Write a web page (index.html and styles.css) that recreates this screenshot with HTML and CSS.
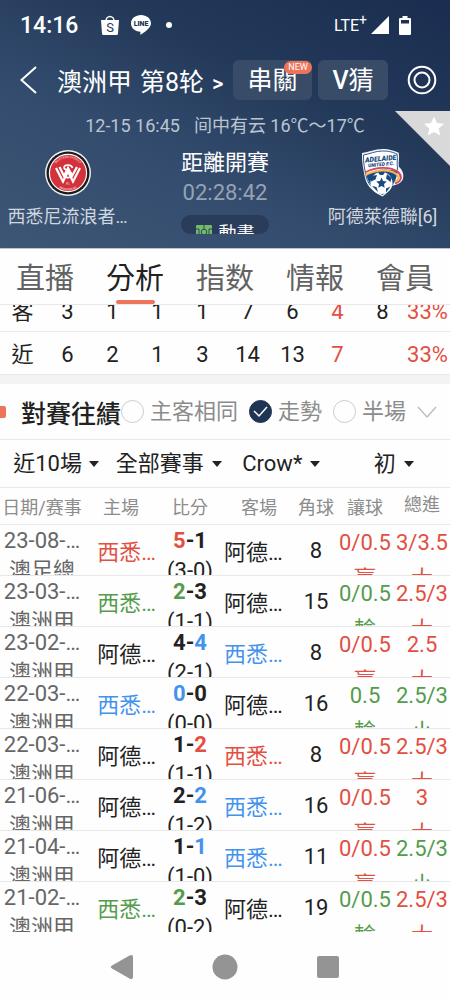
FILE: index.html
```html
<!DOCTYPE html>
<html lang="zh-Hant">
  <head>
    <meta charset="UTF-8" />
    <meta name="viewport" content="width=device-width, initial-scale=1.0" />
    <title>澳洲甲 第8轮</title>
    <link rel="stylesheet" href="styles.css">
  </head>
  <body>
    <!-- ========== HEADER ========== -->
    <header class="hero">
      <div class="status-bar">
        <span class="clock">14:16</span>
        <svg class="status-shop" width="18" height="20" viewBox="0 0 18 20">
          <path d="M5 6a4 4.500 0 0 1 8 0" fill="none" stroke="#fff" stroke-width="1.500" />
          <path d="M0 5h18l-1 13.500a1.500 1.500 0 0 1-1.500 1.500h-13A1.500 1.500 0 0 1 1 18.500z" fill="#fff" />
          <text x="9" y="17" text-anchor="middle" font-size="13" fill="#24395b">S</text>
        </svg>
        <svg class="status-line" width="20" height="20" viewBox="0 0 20 20">
          <path d="M10 0c5.500 0 10 3.600 10 8.200 0 4.800-6.500 9-10 11.300-.6.400-.8 0-.7-.6l.2-2.200C4 16.500 0 12.800 0 8.200 0 3.600 4.500 0 10 0z" fill="#fff" />
          <text x="10" y="11" text-anchor="middle" font-size="7" font-weight="900" fill="#1f3558">LINE</text>
        </svg>
        <span class="status-dot"></span>
        <span class="network">LTE<sup>+</sup></span>
        <svg width="18" height="18" viewBox="0 0 18 18"><path d="M18 0v18H0z" fill="#fff" /></svg>
        <svg class="battery" width="12" height="19" viewBox="0 0 12 19">
          <path d="M3.500 0h5v2H11a1 1 0 0 1 1 1v15a1 1 0 0 1-1 1H1a1 1 0 0 1-1-1V3a1 1 0 0 1 1-1h2.500z" fill="#fff" />
          <path d="M2 4h8v3.500H2z" fill="#1d3155" />
        </svg>
      </div>

      <div class="title-bar">
        <button type="button" class="icon-button back" aria-label="返回">
          <svg width="17" height="28" viewBox="0 0 17 28"><path d="M16 1L1.500 14 16 27" fill="none" stroke="#fff" stroke-width="2" /></svg>
        </button>
        <h1><span>澳洲甲</span><span>第8轮</span><span class="more">&gt;</span></h1>
        <button type="button" class="chip chip-wide">串關<span class="badge">NEW</span></button>
        <button type="button" class="chip"><b>V</b>猜</button>
        <button type="button" class="icon-button target" aria-label="設定">
          <svg width="30" height="30" viewBox="0 0 30 30" fill="none" stroke="#fff" stroke-width="2">
            <circle cx="15" cy="15" r="13.300" />
            <circle cx="15" cy="15" r="7.500" />
          </svg>
        </button>
      </div>

      <p class="kickoff"><span>12-15 16:45</span><span>间中有云 16℃～17℃</span></p>

      <div class="match">
        <div class="team">
          <svg width="48" height="48" viewBox="0 0 48 48">
            <defs>
              <path id="arcTop" d="M9 24a15 15 0 0 1 30 0" />
              <path id="arcBottom" d="M6.500 24a17.500 17.500 0 0 0 35 0" />
            </defs>
            <circle cx="24" cy="24" r="23" fill="#f1eeee" />
            <circle cx="24" cy="24" r="21.500" fill="#191a1d" />
            <circle cx="24" cy="24" r="19.200" fill="#fff" />
            <circle cx="24" cy="24" r="18" fill="#d3323b" />
            <g fill="none" stroke="#fff" stroke-width="2.200">
              <path d="M12 19l7 13.500 5-10 5 10L36 19" />
              <path d="M15.500 18l4.500 9 4-8 4 8 5-9" />
              <path d="M28.500 19c-1-4-8-4-8.500-.5-.3 3 8.500 3 8 7.500-.5 3.500-7 3.500-8 0" stroke-width="1.600" />
            </g>
            <g font-size="3.200" fill="#ffdede" text-anchor="middle">
              <text><textPath href="#arcTop" startOffset="50%">WESTERN SYDNEY</textPath></text>
              <text><textPath href="#arcBottom" startOffset="50%">WANDERERS</textPath></text>
              <text x="24" y="36" font-size="3">FC</text>
            </g>
          </svg>
          <span class="team-name">西悉尼流浪者…</span>
        </div>

        <div class="countdown">
          <span class="countdown-label">距離開賽</span>
          <span class="countdown-time">02:28:42</span>
          <button type="button" class="animation">
            <svg width="16" height="14" viewBox="0 0 16 14">
              <rect width="16" height="14" rx="1" fill="#75b96c" />
              <g fill="none" stroke="#2c4a55" stroke-width="1">
                <circle cx="8" cy="7" r="2.800" />
                <path d="M8 0v4M8 10v4M0 4h3v6H0M16 4h-3v6h3" />
              </g>
            </svg>
            動畫
          </button>
        </div>

        <div class="team">
          <svg width="48" height="48" viewBox="2 0 46 48">
            <path d="M4 4c7-1 13-4 20.500-4S36 2 40.500 3.500c1.500 5-.5 10 .5 14.500 4 3 5.500 9 3.500 13s-8 5-10.500 6c-3 4.500-5 7.500-9.500 10.500C17 44 9 38 7 29 5.500 21 3.500 13 4 4z" fill="#f2f4f7" />
            <path d="M5.500 6C12 5 17 2 24.500 2S35 3.500 39 5c1 5-.5 9 .5 14-1 9-7 21-15 26.500C17 42 10.500 36 8.500 29 7 21 5 14 5.500 6z" fill="#fff" stroke="#315d91" stroke-width="1" />
            <path d="M8.500 26c9-6 22-7 31-3-1 9-7 18-15 22.500C17 42 10 35 8.500 26z" fill="#174a80" />
            <circle cx="23.500" cy="34" r="11" fill="#fff" />
            <g fill="#174a80">
              <path d="M23.500 28.500l1.500 3.500 3.800.5-2.800 2.500.7 3.800-3.200-1.800-3.200 1.800.7-3.800-2.800-2.500 3.800-.5z" />
              <path d="M13 27l6-1-1.500 4.500-4.500 2zM29 25l4.500 4-1 4-4.500-3.500zM14 37l4.500 1 1.500 5zM28 39.500l4.500-2-4.500 6zM20 23.500l3.500-1.500 3.500 1.500-2 2.500h-3z" />
            </g>
            <path d="M7 23.500c11-6 26-6 33-.5 4.500 4 4 9-3 11.500" fill="none" stroke="#d74266" stroke-width="1.800" />
            <path d="M7.500 26c11-6 25-6 31-.8 3.500 3.500 2.500 6-1.500 7" fill="none" stroke="#f5b94e" stroke-width="2" />
            <g font-weight="900" font-style="italic" fill="#17477c" text-anchor="middle" transform="rotate(-5 24 13)">
              <text x="23" y="12" font-size="7">ADELAIDE</text>
              <text x="23" y="17" font-size="5">UNITED F.C.</text>
            </g>
          </svg>
          <span class="team-name">阿德萊德聯[6]</span>
        </div>
      </div>

      <button type="button" class="favorite" aria-label="收藏">
        <svg width="55" height="55" viewBox="0 0 55 55">
          <path d="M0 0h55v55z" fill="#d9d9d9" />
          <path d="M39 5.500l3 6.500 7 .8-5.200 4.800 1.400 7L39 21l-6.200 3.600 1.400-7-5.200-4.800 7-.8z" fill="#fff" />
        </svg>
      </button>
    </header>

    <!-- ========== TABS ========== -->
    <nav class="tabs">
      <a href="#live">直播</a>
      <a href="#analysis" class="active">分析</a>
      <a href="#odds">指数</a>
      <a href="#news">情報</a>
      <a href="#member">會員</a>
    </nav>

    <main>
      <!-- ========== STANDINGS ========== -->
      <div class="standings-view">
        <table class="standings">
          <tbody>
            <tr><th scope="row">客</th><td>3</td><td>1</td><td>1</td><td>1</td><td>7</td><td>6</td><td class="red">4</td><td>8</td><td class="red">33%</td></tr>
            <tr><th scope="row">近</th><td>6</td><td>2</td><td>1</td><td>3</td><td>14</td><td>13</td><td class="red">7</td><td></td><td class="red">33%</td></tr>
          </tbody>
        </table>
      </div>

      <!-- ========== HEAD TO HEAD ========== -->
      <section class="h2h" id="analysis">
        <div class="section-head">
          <h2>對賽往績</h2>
          <label class="check"><input type="checkbox" />主客相同</label>
          <label class="check"><input type="checkbox" checked />走勢</label>
          <label class="check"><input type="checkbox" />半場</label>
          <button type="button" class="icon-button fold" aria-label="收起">
            <svg width="20" height="12" viewBox="0 0 20 12"><path d="M1 1l9 10 9-10" fill="none" stroke="#bbb" stroke-width="1.300" /></svg>
          </button>
        </div>

        <div class="filters">
          <label class="filter"><select aria-label="場數"><option>近10場</option></select></label>
          <label class="filter"><select aria-label="賽事"><option>全部賽事</option></select></label>
          <label class="filter"><select aria-label="公司"><option>Crow*</option></select></label>
          <label class="filter"><select aria-label="盤口"><option>初</option></select></label>
        </div>

        <table class="results">
          <colgroup>
            <col class="col-date"><col class="col-team"><col class="col-score"><col class="col-team"><col class="col-corner"><col class="col-handicap"><col class="col-total">
          </colgroup>
          <thead>
            <tr>
              <th>日期/赛事</th>
              <th>主場</th>
              <th>比分</th>
              <th>客場</th>
              <th>角球</th>
              <th>讓球</th>
              <th><div class="wrap-head">總進球</div></th>
            </tr>
          </thead>
          <tbody>
            <tr>
              <td><div class="cell date">23-08-…<br>澳足總</div></td>
              <td class="home red">西悉…</td>
              <td><div class="cell"><b><span class="red">5</span>-1</b><br>(3-0)</div></td>
              <td class="away">阿德…</td>
              <td class="corner">8</td>
              <td class="red"><div class="cell odds">0/0.5<br>贏</div></td>
              <td class="red"><div class="cell odds">3/3.5<br>大</div></td>
            </tr>
            <tr>
              <td><div class="cell date">23-03-…<br>澳洲甲</div></td>
              <td class="home green">西悉…</td>
              <td><div class="cell"><b><span class="green">2</span>-3</b><br>(1-1)</div></td>
              <td class="away">阿德…</td>
              <td class="corner">15</td>
              <td class="green"><div class="cell odds">0/0.5<br>輸</div></td>
              <td class="red"><div class="cell odds">2.5/3<br>大</div></td>
            </tr>
            <tr>
              <td><div class="cell date">23-02-…<br>澳洲甲</div></td>
              <td class="home">阿德…</td>
              <td><div class="cell"><b>4-<span class="blue">4</span></b><br>(2-1)</div></td>
              <td class="away blue">西悉…</td>
              <td class="corner">8</td>
              <td class="red"><div class="cell odds">0/0.5<br>贏</div></td>
              <td class="red"><div class="cell odds">2.5<br>大</div></td>
            </tr>
            <tr>
              <td><div class="cell date">22-03-…<br>澳洲甲</div></td>
              <td class="home blue">西悉…</td>
              <td><div class="cell"><b><span class="blue">0</span>-0</b><br>(0-0)</div></td>
              <td class="away">阿德…</td>
              <td class="corner">16</td>
              <td class="green"><div class="cell odds">0.5<br>輸</div></td>
              <td class="green"><div class="cell odds">2.5/3<br>小</div></td>
            </tr>
            <tr>
              <td><div class="cell date">22-03-…<br>澳洲甲</div></td>
              <td class="home">阿德…</td>
              <td><div class="cell"><b>1-<span class="red">2</span></b><br>(1-1)</div></td>
              <td class="away red">西悉…</td>
              <td class="corner">8</td>
              <td class="red"><div class="cell odds">0/0.5<br>贏</div></td>
              <td class="red"><div class="cell odds">2.5/3<br>大</div></td>
            </tr>
            <tr>
              <td><div class="cell date">21-06-…<br>澳洲甲</div></td>
              <td class="home">阿德…</td>
              <td><div class="cell"><b>2-<span class="blue">2</span></b><br>(1-2)</div></td>
              <td class="away blue">西悉…</td>
              <td class="corner">16</td>
              <td class="red"><div class="cell odds">0/0.5<br>贏</div></td>
              <td class="red"><div class="cell odds">3<br>大</div></td>
            </tr>
            <tr>
              <td><div class="cell date">21-04-…<br>澳洲甲</div></td>
              <td class="home">阿德…</td>
              <td><div class="cell"><b>1-<span class="blue">1</span></b><br>(1-0)</div></td>
              <td class="away blue">西悉…</td>
              <td class="corner">11</td>
              <td class="red"><div class="cell odds">0/0.5<br>贏</div></td>
              <td class="green"><div class="cell odds">2.5/3<br>小</div></td>
            </tr>
            <tr>
              <td><div class="cell date">21-02-…<br>澳洲甲</div></td>
              <td class="home green">西悉…</td>
              <td><div class="cell"><b><span class="green">2</span>-3</b><br>(0-2)</div></td>
              <td class="away">阿德…</td>
              <td class="corner">19</td>
              <td class="green"><div class="cell odds">0/0.5<br>輸</div></td>
              <td class="red"><div class="cell odds">2.5/3<br>大</div></td>
            </tr>
          </tbody>
        </table>
      </section>
    </main>

    <!-- ========== SYSTEM NAV ========== -->
    <footer class="system-nav">
      <button type="button" class="icon-button" aria-label="Back">
        <svg width="26" height="26" viewBox="0 0 26 26"><path d="M3 11.500L20.500 1.500Q24 0 24 3v20q0 3-3.500 1.500L3 14.500q-2.500-1.500 0-3z" fill="#949494" /></svg>
      </button>
      <button type="button" class="icon-button" aria-label="Home">
        <svg width="26" height="26" viewBox="0 0 26 26"><circle cx="13" cy="13" r="12.500" fill="#949494" /></svg>
      </button>
      <button type="button" class="icon-button" aria-label="Recent">
        <svg width="26" height="26" viewBox="0 0 26 26"><rect x="2" y="2" width="22" height="22" rx="2" fill="#949494" /></svg>
      </button>
    </footer>
  </body>
</html>
```
FILE: styles.css
```css
:root {
  --text: #222;
  --muted: #8c8c8c;
  --line: #e8e8e8;
  --accent: #ee735b;
  --red: #e34f41;
  --green: #549c4b;
  --blue: #4393ee;
}

* {
  margin: 0;
  padding: 0;
  box-sizing: border-box;
}

body {
  min-height: 100vh;
  display: flex;
  flex-direction: column;
  background: #fefefe;
  color: var(--text);
  font-family: Roboto, "Noto Sans CJK TC", sans-serif;
  font-size: 22px;
}

button,
input,
select {
  font: inherit;
  color: inherit;
  border: none;
  background: none;
}

button {
  cursor: pointer;
}

svg {
  display: block;
}

.icon-button {
  flex: none;
}

.red {
  color: var(--red);
}

.green {
  color: var(--green);
}

.blue {
  color: var(--blue);
}

/* ========== HEADER ========== */
.hero {
  position: relative;
  height: 249px;
  overflow: hidden;
  border-bottom: 1px solid #bac3cf;
  background: linear-gradient(25deg, #3d5676 0%, #344d6e 35%, #23395a 65%, #1a2d50 100%);
  color: #fff;
}

.status-bar {
  display: flex;
  align-items: center;
  height: 50px;
  padding: 0 39px 0 20px;
}

.clock {
  width: 57px;
  font-size: 23px;
  font-weight: 500;
}

.status-shop {
  margin-left: 24px;
}

.status-line {
  margin-left: 12px;
}

.status-dot {
  width: 6px;
  height: 6px;
  margin-left: 15px;
  border-radius: 50%;
  background: #fff;
}

.network {
  margin: 0 4px 0 auto;
  font-size: 16px;
}

.network sup {
  font-size: 14px;
  line-height: 1px;
}

.battery {
  margin-left: 10px;
}

.title-bar {
  display: flex;
  align-items: center;
  height: 60px;
  padding: 0 13px 0 20px;
}

.title-bar h1 {
  flex: 1;
  display: flex;
  align-items: baseline;
  gap: 8px;
  margin-left: 20px;
  font-size: 25px;
  font-weight: 400;
  white-space: nowrap;
}

.more {
  font-size: 22px;
  font-weight: 500;
}

.chip {
  position: relative;
  width: 70px;
  height: 40px;
  margin-right: 19px;
  border-radius: 6px;
  background: #384b67;
  font-size: 25px;
  line-height: 42px;
}

.chip-wide {
  width: 79px;
  margin-right: 6px;
}

.chip b {
  font-weight: 500;
}

.badge {
  position: absolute;
  top: 1px;
  right: 0;
  width: 28px;
  border-radius: 7px;
  background: var(--accent);
  font-size: 9px;
  line-height: 13px;
}

.kickoff {
  display: flex;
  justify-content: center;
  gap: 14px;
  color: #bbc5d1;
  font-size: 18px;
  line-height: 32px;
}

.match {
  display: flex;
  justify-content: space-between;
  padding: 7px 0 0;
}

.team {
  flex: 1;
  display: flex;
  flex-direction: column;
  align-items: center;
  color: #d0d7df;
}

.team-name {
  margin-top: 6px;
  font-size: 18px;
  line-height: 28px;
  white-space: nowrap;
}

.countdown {
  flex: none;
  width: 180px;
  display: flex;
  flex-direction: column;
  align-items: center;
}

.countdown-label {
  line-height: 28px;
}

.countdown-time {
  color: #96a2b4;
  line-height: 32px;
}

.animation {
  display: flex;
  justify-content: center;
  gap: 7px;
  width: 88px;
  height: 19px;
  margin-top: 6px;
  overflow: hidden;
  border-radius: 10px;
  background: #293c5a;
  font-size: 18px;
  line-height: 38px;
}

.animation svg {
  flex: none;
  margin-top: 10px;
}

.favorite {
  position: absolute;
  top: 111px;
  right: 0;
}

/* ========== TABS ========== */
.tabs {
  display: flex;
  border-bottom: 1px solid var(--line);
}

.tabs a {
  flex: 1;
  display: flex;
  flex-direction: column;
  align-items: center;
  height: 55px;
  color: #626262;
  font-size: 29px;
  line-height: 60px;
  text-decoration: none;
}

.tabs .active {
  color: var(--text);
}

.tabs .active::after {
  content: "";
  flex: none;
  width: 39px;
  height: 4px;
  margin-top: -9px;
  border-radius: 2px;
  background: var(--accent);
}

/* ========== STANDINGS ========== */
.standings-view {
  display: flex;
  align-items: flex-end;
  height: 70px;
  overflow: hidden;
}

table {
  width: 100%;
  table-layout: fixed;
  border-collapse: collapse;
  text-align: center;
}

th {
  font-weight: 400;
}

.standings tr {
  border-bottom: 1px solid var(--line);
}

.standings th,
.standings td {
  height: 43px;
  padding-top: 5px;
  line-height: 36px;
  vertical-align: baseline;
}

/* ========== HEAD TO HEAD ========== */
.h2h {
  border-top: 9px solid #f3f3f3;
}

.section-head {
  display: flex;
  align-items: center;
  height: 56px;
  padding-right: 13px;
  border-bottom: 1px solid var(--line);
}

.section-head h2 {
  display: flex;
  align-items: center;
  gap: 15px;
  font-size: 25px;
  font-weight: 500;
  white-space: nowrap;
}

.section-head h2::before {
  content: "";
  width: 6px;
  height: 12px;
  border-radius: 0 2px 2px 0;
  background: var(--accent);
}

.check {
  display: flex;
  align-items: center;
  gap: 6px;
  margin-right: 11px;
  color: var(--muted);
  line-height: 32px;
  white-space: nowrap;
}

.check input {
  appearance: none;
  flex: none;
  width: 23px;
  height: 23px;
  border: 1px solid #ccc;
  border-radius: 50%;
}

.check input:checked {
  border-color: #203554;
  background: #203554 url("data:image/svg+xml,%3Csvg xmlns='http://www.w3.org/2000/svg' viewBox='0 0 21 21'%3E%3Cpath d='M4 10l5 5 8-9' fill='none' stroke='white' stroke-width='1.500'/%3E%3C/svg%3E") center / 21px no-repeat;
}

.filters {
  display: flex;
  height: 48px;
  border-bottom: 1px solid var(--line);
}

.filter {
  flex: 1;
  display: flex;
  align-items: center;
  justify-content: center;
  gap: 7px;
}

.filter::after {
  content: "";
  border: 5px solid transparent;
  border-top: 6px solid var(--text);
  border-bottom: none;
}

.filter select {
  appearance: none;
  line-height: 36px;
  cursor: pointer;
}

.col-date {
  width: 84px;
}

.col-team {
  width: 74px;
}

.col-score {
  width: 64px;
}

.col-corner {
  width: 40px;
}

.col-handicap {
  width: 58px;
}

.col-total {
  width: 56px;
}

.results tr {
  border-bottom: 1px solid var(--line);
}

.results tbody tr:last-child {
  border-bottom: none;
}

.results th {
  height: 36px;
  color: var(--muted);
  font-size: 18px;
  white-space: nowrap;
}

.wrap-head {
  height: 34px;
  padding: 0 10px;
  overflow: hidden;
  line-height: 32px;
  white-space: normal;
}

.results td {
  height: 51px;
  white-space: nowrap;
}

/* second line runs past the row and is cut off */
.cell {
  height: 50px;
  padding-top: 1px;
  overflow: hidden;
  line-height: 30px;
}

.date {
  color: #666;
}

.odds {
  padding-top: 0;
  line-height: 36px;
}

.results .corner {
  padding-top: 2px;
}

.results .home {
  padding-right: 2px;
  text-align: right;
}

.results .away {
  padding-left: 2px;
  text-align: left;
}

/* ========== SYSTEM NAV ========== */
.system-nav {
  display: flex;
  justify-content: center;
  align-items: center;
  gap: 77px;
  height: 67px;
  margin-top: auto;
}
```
